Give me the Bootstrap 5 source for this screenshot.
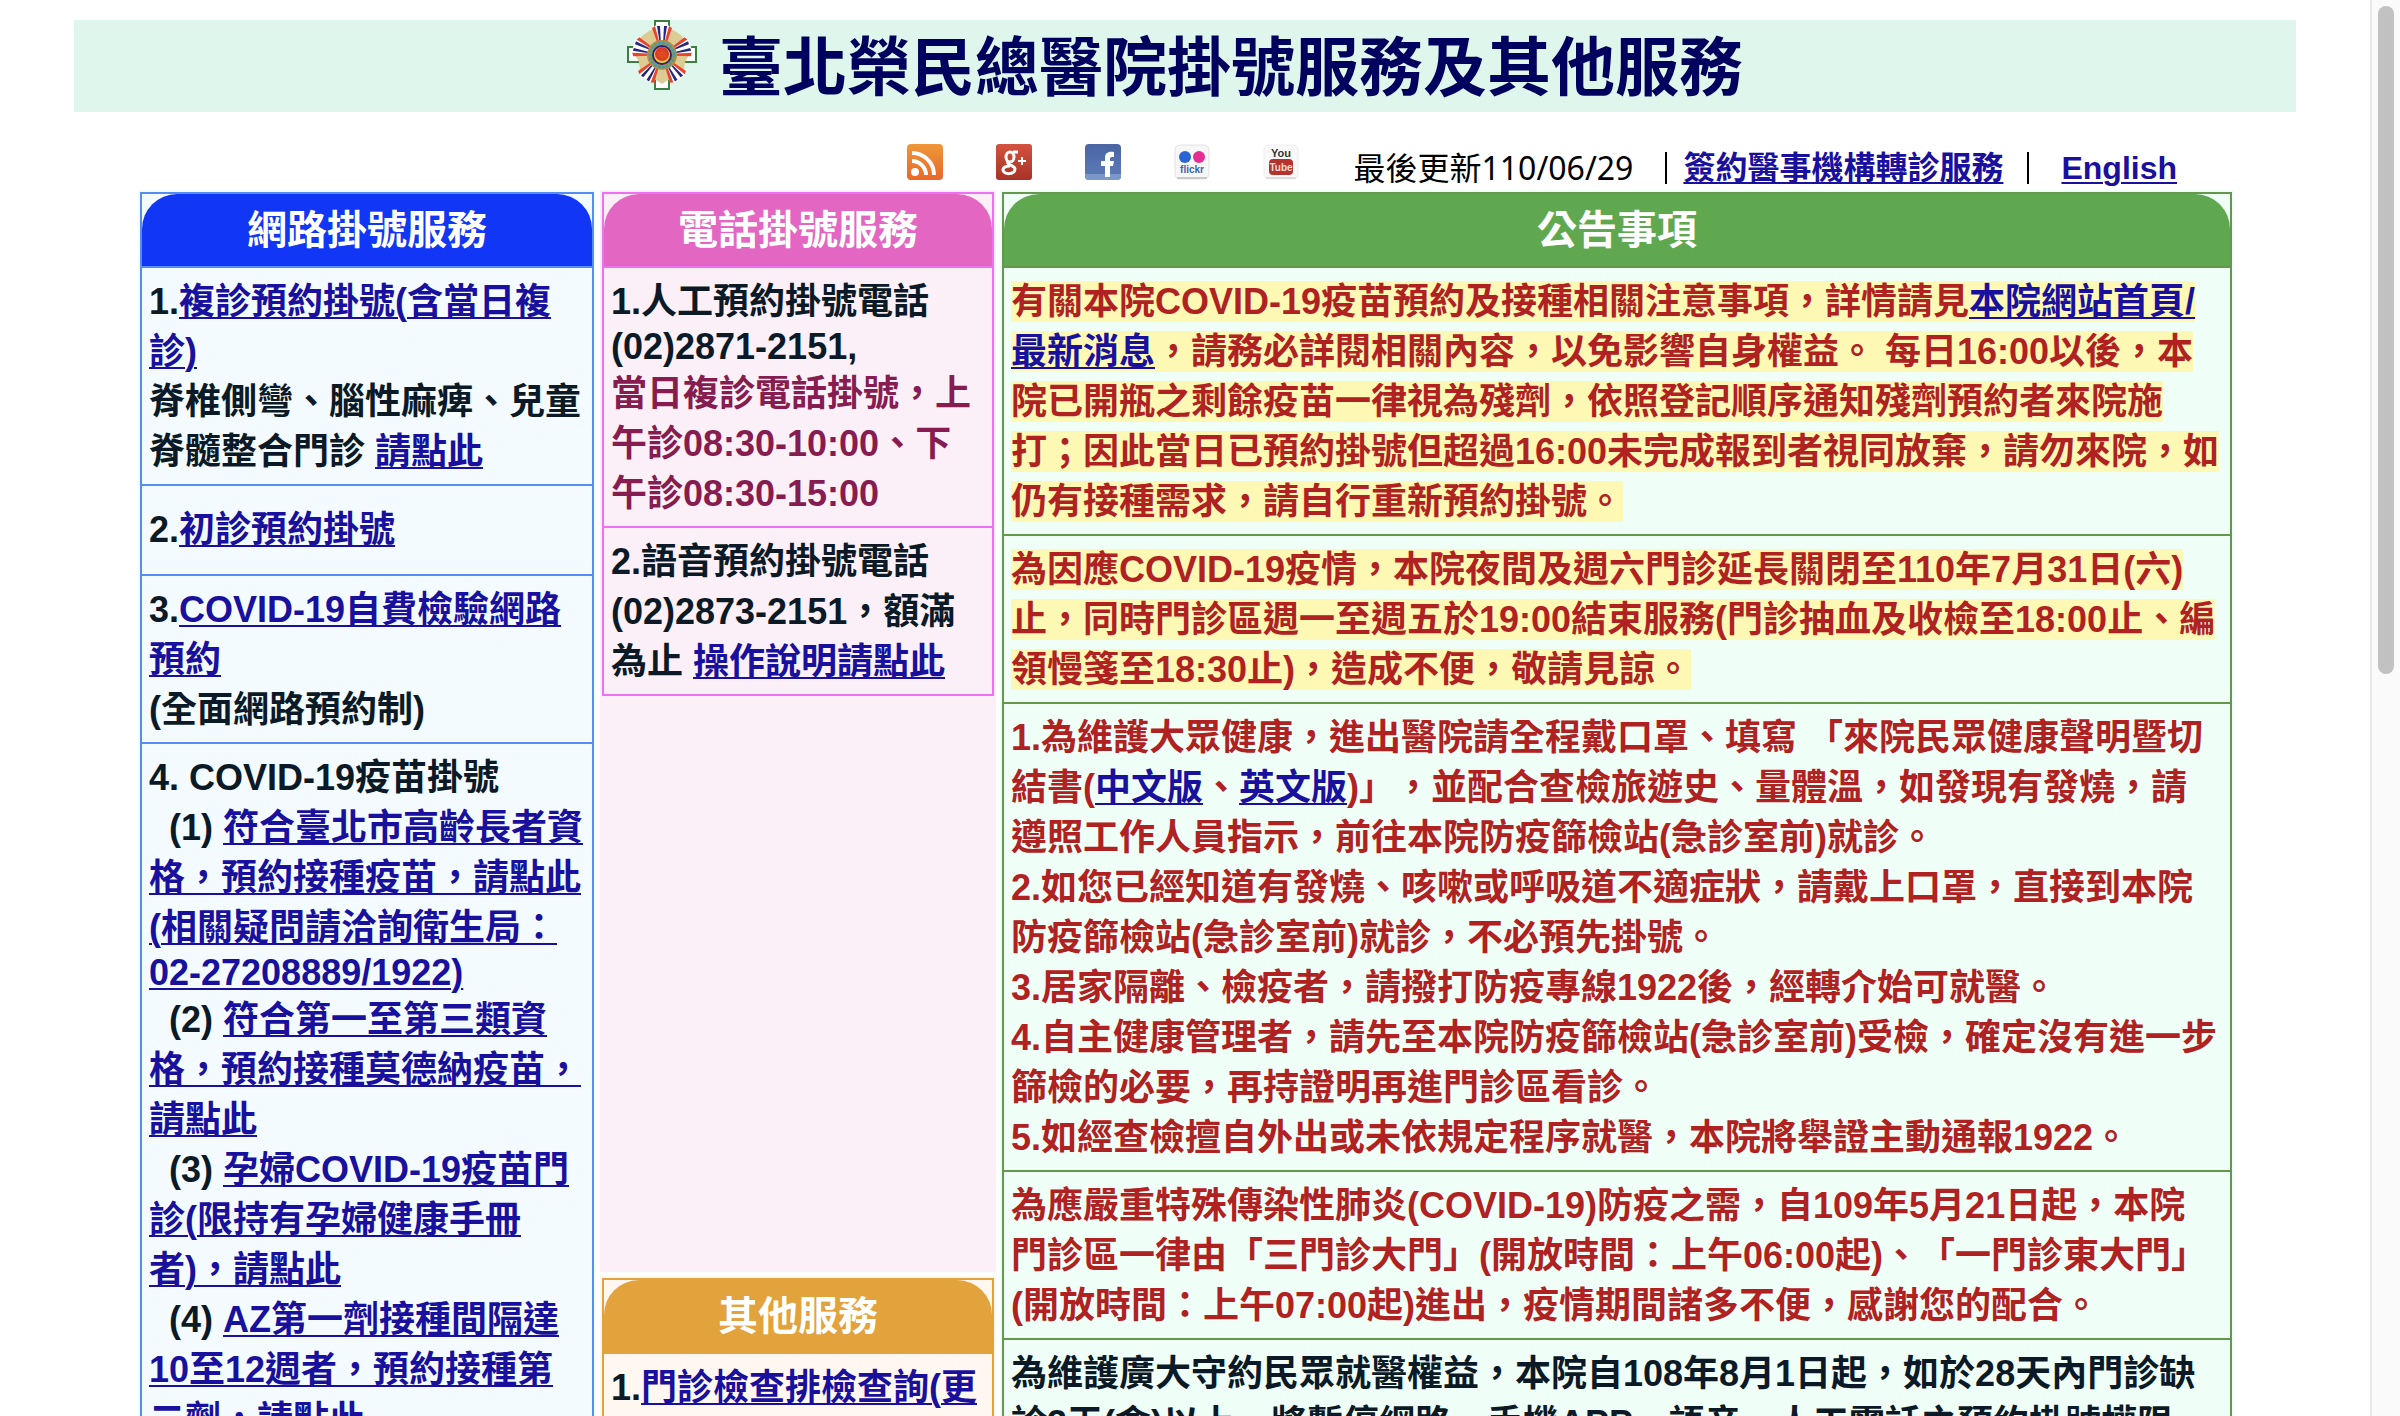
<!DOCTYPE html>
<html lang="zh-Hant">
<head>
<meta charset="utf-8">
<meta name="viewport" content="width=device-width, initial-scale=1">
<title>臺北榮民總醫院掛號服務及其他服務</title>
<link href="https://cdn.jsdelivr.net/npm/bootstrap@5.3.0/dist/css/bootstrap.min.css" rel="stylesheet">
<style>
body{font-family:"Liberation Sans","Noto Sans CJK TC",sans-serif;color:#0b1a26;background:#fff;text-spacing-trim:space-all;font-feature-settings:"chws" 0}
a{color:#1a109e;text-decoration:underline;text-decoration-thickness:2px;text-underline-offset:3px}
.site-banner{margin:20px 74px 0;background:#dff6ec;color:#00005f;height:92px}
.site-banner h1{font-size:64px;line-height:96px}
.emblem{width:70px;height:70px;margin-right:22px}
.tool-row{margin:0 136px 0 138px;padding:32px 57px 0 0;height:78px;font-size:32px;line-height:48px;color:#000}
.social-set{gap:53px;margin-right:54px}
.social-set a,.social-set svg{display:block;width:36px;height:36px}
.updated-on{font-family:"Noto Sans","Noto Sans CJK TC",sans-serif;margin-right:32px}
.vbar{width:2px;height:32px;background:#000}
.service-grid{margin:0 136px 0 138px;gap:4px;grid-template-columns:minmax(0,458fr) minmax(0,396fr) minmax(0,1234fr)}
.col-tel{gap:4px}
.panel{padding:2px;background:var(--fill)}
.panel-box{border:2px solid var(--line)}
.panel-box h2{margin:0;height:72px;line-height:72px;font-size:40px;font-weight:700;text-align:center;color:#fff;background:var(--head);border-radius:35px 35px 0 0}
.panel-box li{border-top:2px solid var(--line);padding:9px 7px 7px;font-size:36px;line-height:50px;font-weight:700}
.panel-box li.roomy{padding:19px 7px}
.p-news .panel-box li{padding-right:10px}
.p-net{--line:#558df2;--head:#1136f5;--fill:#f3fbff}
.p-tel{--line:#ee70f5;--head:#e366c3;--fill:#fbf0f8;height:1082px}
.p-etc{--line:#e2a23c;--head:#e2a23c;--fill:#fff7f0}
.p-news{--line:#64994b;--head:#60a850;--fill:#f0fef8}
.digits-line{display:block;line-height:40px;padding-bottom:2px}
.same-day{color:#861c50}
.alert-text{color:#b02222}
.hilite{background:#fdf9b4}
.scroll-track{width:30px;background:#fafafa;border-left:2px solid #e8e8e8;padding:6px 6px}
.scroll-thumb{height:668px;width:16px;border-radius:8px;background:#c1c1c1}
</style>
<script src="https://cdn.jsdelivr.net/npm/bootstrap@5.3.0/dist/js/bootstrap.bundle.min.js"></script>
</head>
<body class="d-flex vh-100 overflow-hidden">
<main class="flex-grow-1 overflow-hidden">
  <header class="site-banner d-flex justify-content-center">
    <svg class="emblem flex-shrink-0" viewBox="0 0 70 70" aria-hidden="true">
      <path d="M28 1h14v26h27v15H42v27H28V42H1V27h27z" fill="#fff" stroke="#3b8040" stroke-width="2"/>
      <path d="M35 7l6 1 7 3 7 5 3 6 0 7 4 6-4 7-1 8-6 3-3 6-7 1-6 4-6-4-7-1-3-6-6-3-1-8-4-7 4-6 0-7 3-6 7-5 7-3z" fill="#dccb92"/>
      <g id="ribbons">
        <g id="rb"><path d="M25 7l5-2h10l5 2-6 18h-8z" fill="#fff"/><path d="M25 8l3-2 5 19h-2zM45 8l-3-2-5 19h2z" fill="#e8432d"/><path d="M30 6h3l1 19h-1zM40 6h-3l-1 19h1z" fill="#27277e"/></g>
        <use href="#rb" transform="rotate(72 35 35)"/><use href="#rb" transform="rotate(144 35 35)"/><use href="#rb" transform="rotate(216 35 35)"/><use href="#rb" transform="rotate(288 35 35)"/>
      </g>
      <circle cx="35" cy="35" r="15" fill="#b8903a"/>
      <circle cx="35" cy="35" r="12" fill="none" stroke="#4a9ba8" stroke-width="3" stroke-dasharray="3 1"/>
      <circle cx="35" cy="35" r="9" fill="#f1d33c" stroke="#27277e" stroke-width="2"/>
      <circle cx="35" cy="34" r="7" fill="#e33a25"/>
      <path d="M31 33h8M31 36h8M35 29v10" stroke="#c8601e"/>
    </svg>
    <h1 class="m-0 fw-bold text-nowrap">臺北榮民總醫院掛號服務及其他服務</h1>
  </header>

  <nav class="tool-row d-flex justify-content-end align-items-start text-nowrap">
    <div class="social-set d-flex">
      <a href="#" aria-label="RSS"><svg viewBox="0 0 36 36"><defs><linearGradient id="gr" x2="0" y2="1"><stop stop-color="#ee9738"/><stop offset="1" stop-color="#ea672a"/></linearGradient></defs><rect width="36" height="36" rx="4" fill="url(#gr)"/><circle cx="8" cy="28" r="4" fill="#fff"/><path d="M5 17a14 14 0 0 1 14 14M5 9a22 22 0 0 1 22 22" fill="none" stroke="#fff" stroke-width="4"/></svg></a>
      <a href="#" aria-label="Google+"><svg viewBox="0 0 36 36"><defs><linearGradient id="gg" x2="0" y2="1"><stop stop-color="#d2533f"/><stop offset="1" stop-color="#a93226"/></linearGradient></defs><rect width="36" height="36" rx="3" fill="url(#gg)"/><g fill="none" stroke="#fff" stroke-width="3"><ellipse cx="14" cy="13" rx="4" ry="5"/><path d="M17 8h5M12 18c-2 3 7 3 7 7 0 6-12 6-12 1 0-3 4-4 7-4"/></g><path d="M22 17h8M26 13v8" stroke="#fff" stroke-width="2"/></svg></a>
      <a href="#" aria-label="Facebook"><svg viewBox="0 0 36 36"><defs><linearGradient id="gf" x2="0" y2="1"><stop stop-color="#4a64a4"/><stop offset="1" stop-color="#5f7db8"/></linearGradient></defs><rect width="36" height="36" rx="4" fill="url(#gf)"/><path d="M0 30h36v2a4 4 0 0 1-4 4H4a4 4 0 0 1-4-4z" fill="#7c97c9"/><path d="M20 33V22h-4v-5h4v-3c0-5 3-7 9-6v5c-3 0-4 0-4 2v2h4l-1 5h-3v11z" fill="#fff"/></svg></a>
      <a href="#" aria-label="Flickr"><svg viewBox="0 0 36 36"><rect x="1" y="1" width="34" height="34" rx="5" fill="#f7f7f8" stroke="#e2e2e4"/><path d="M3 34h30" stroke="#c9c9cb" stroke-width="2"/><circle cx="11" cy="13" r="6" fill="#2a63d4"/><circle cx="25" cy="13" r="6" fill="#e62d93"/><text x="18" y="29" text-anchor="middle" font-size="10" font-weight="700" fill="#3b62b0">flickr</text></svg></a>
      <a href="#" aria-label="YouTube"><svg viewBox="0 0 36 36"><rect x="1" y="1" width="34" height="34" rx="5" fill="#f9f9f9" stroke="#eee"/><path d="M3 34h30" stroke="#ddd" stroke-width="2"/><text x="18" y="13" text-anchor="middle" font-size="11" font-weight="700" fill="#333">You</text><rect x="6" y="15" width="24" height="16" rx="4" fill="#b5332c"/><text x="18" y="27" text-anchor="middle" font-size="10" font-weight="700" fill="#f4dcda">Tube</text></svg></a>
    </div>
    <span class="updated-on">最後更新110/06/29</span>
    <span class="vbar mt-2 me-3"></span>
    <a class="fw-bold me-4" href="#">簽約醫事機構轉診服務</a>
    <span class="vbar mt-2 me-4"></span>
    <a class="fw-bold ms-2" href="#">English</a>
  </nav>

  <div class="service-grid d-grid align-items-stretch">
    <section class="panel p-net">
      <div class="panel-box">
        <h2>網路掛號服務</h2>
        <ul class="list-unstyled m-0">
          <li>1.<a href="#">複診預約掛號(含當日複診)</a><br>脊椎側彎、腦性麻痺、兒童脊髓整合門診 <a href="#">請點此</a></li>
          <li class="roomy">2.<a href="#">初診預約掛號</a></li>
          <li>3.<a href="#">COVID-19自費檢驗網路預約</a><br>(全面網路預約制)</li>
          <li>4. COVID-19疫苗掛號<br>
            &nbsp;&nbsp;(1) <a href="#">符合臺北市高齡長者資格，預約接種疫苗，請點此(相關疑問請洽詢衛生局：<span class="digits-line">02-27208889/1922)</span></a>
            &nbsp;&nbsp;(2) <a href="#">符合第一至第三類資格，預約接種莫德納疫苗，請點此</a><br>
            &nbsp;&nbsp;(3) <a href="#">孕婦COVID-19疫苗門診(限持有孕婦健康手冊者)，請點此</a><br>
            &nbsp;&nbsp;(4) <a href="#">AZ第一劑接種間隔達10至12週者，預約接種第二劑，請點此</a></li>
        </ul>
      </div>
    </section>

    <div class="col-tel d-flex flex-column">
      <section class="panel p-tel">
        <div class="panel-box">
          <h2>電話掛號服務</h2>
          <ul class="list-unstyled m-0">
            <li>1.人工預約掛號電話<span class="digits-line">(02)2871-2151,</span><span class="same-day">當日複診電話掛號，上午診08:30-10:00、下午診08:30-15:00</span></li>
            <li>2.語音預約掛號電話(02)2873-2151，額滿為止 <a href="#">操作說明請點此</a></li>
          </ul>
        </div>
      </section>
      <section class="panel p-etc">
        <div class="panel-box">
          <h2>其他服務</h2>
          <ul class="list-unstyled m-0">
            <li>1.<a href="#">門診檢查排檢查詢(更改)</a></li>
          </ul>
        </div>
      </section>
    </div>

    <section class="panel p-news">
      <div class="panel-box">
        <h2>公告事項</h2>
        <ul class="list-unstyled m-0">
          <li class="alert-text"><span class="hilite">有關本院COVID-19疫苗預約及接種相關注意事項，詳情請見<a href="#">本院網站首頁/最新消息</a>，請務必詳閱相關內容，以免影響自身權益。 每日16:00以後，本院已開瓶之剩餘疫苗一律視為殘劑，依照登記順序通知殘劑預約者來院施打；因此當日已預約掛號但超過16:00未完成報到者視同放棄，請勿來院，如仍有接種需求，請自行重新預約掛號。</span></li>
          <li class="alert-text"><span class="hilite">為因應COVID-19疫情，本院夜間及週六門診延長關閉至110年7月31日(六)止，同時門診區週一至週五於19:00結束服務(門診抽血及收檢至18:00止、編領慢箋至18:30止)，造成不便，敬請見諒。</span></li>
          <li class="alert-text">1.為維護大眾健康，進出醫院請全程戴口罩、填寫 「來院民眾健康聲明暨切結書(<a href="#">中文版</a>、<a href="#">英文版</a>)」，並配合查檢旅遊史、量體溫，如發現有發燒，請遵照工作人員指示，前往本院防疫篩檢站(急診室前)就診。<br>2.如您已經知道有發燒、咳嗽或呼吸道不適症狀，請戴上口罩，直接到本院防疫篩檢站(急診室前)就診，不必預先掛號。<br>3.居家隔離、檢疫者，請撥打防疫專線1922後，經轉介始可就醫。<br>4.自主健康管理者，請先至本院防疫篩檢站(急診室前)受檢，確定沒有進一步篩檢的必要，再持證明再進門診區看診。<br>5.如經查檢擅自外出或未依規定程序就醫，本院將舉證主動通報1922。</li>
          <li class="alert-text">為應嚴重特殊傳染性肺炎(COVID-19)防疫之需，自109年5月21日起，本院門診區一律由「三門診大門」(開放時間：上午06:00起)、「一門診東大門」(開放時間：上午07:00起)進出，疫情期間諸多不便，感謝您的配合。</li>
          <li>為維護廣大守約民眾就醫權益，本院自108年8月1日起，如於28天內門診缺診3天(含)以上，將暫停網路、手機APP、語音、人工電話之預約掛號權限180天。</li>
        </ul>
      </div>
    </section>
  </div>
</main>
<div class="scroll-track flex-shrink-0" aria-hidden="true"><div class="scroll-thumb"></div></div>
</body>
</html>
